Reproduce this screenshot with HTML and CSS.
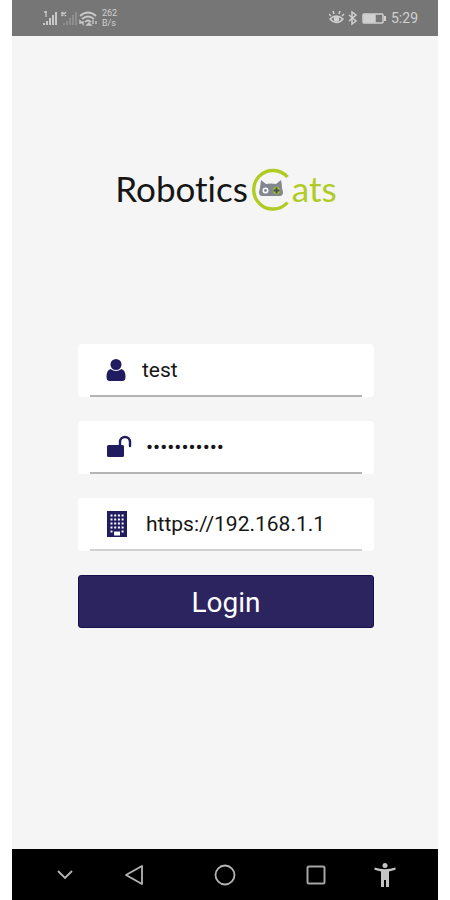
FILE: index.html
```html
<!DOCTYPE html>
<html lang="en">
<head>
<meta charset="utf-8">
<meta name="viewport" content="width=device-width, initial-scale=1">
<title>RoboticsCats Login</title>
<link rel="stylesheet" href="styles.css">
</head>
<body>
<div class="phone">
  <header class="status">
    <div class="status-group">
      <svg class="signals" width="56" height="18" viewBox="0 0 56 18" fill="none" stroke="#c9c9c9">
        <g stroke-width="2"><path d="M2 16v-2M5 16v-4M8 16V9M11 16V6M14 16V3"/><path d="M2 3h3M4 2v6" stroke-width="1.3"/></g>
        <path d="M20 3l4 4M24 3l-4 4M20 3v4" stroke-width="1.3"/>
        <path d="M22 16v-2M25 16v-4M28 16V9M31 16V6M34 16V3" stroke-width="1.5" stroke="#979797"/>
        <path d="M38 7q8-7 16 0M40 10q6-5 12 0M43 13q3-3 6 0" stroke-width="1.7"/>
        <path d="M38 15v-3l3 3v-3M45 16l2-2 2 2zM51 11v4M54 15v-3" stroke-width="1.4"/>
      </svg>
      <p class="speed">262<br>B/s</p>
    </div>
    <div class="status-group">
      <svg width="58" height="16" viewBox="0 0 58 16" fill="none" stroke="#d0d0d0" stroke-width="1.5">
        <path d="M1 9q6-6 13 0q-6 7-13 0zM2 6L0 4M5 4L4 1M10 4l1-3M13 6l2-2"/>
        <circle cx="7.500" cy="9" r="2" fill="#d0d0d0"/>
        <path d="M20 5l7 6-4 3V2l4 3-7 6"/>
        <rect x="34" y="4" width="20" height="9" rx="1"/>
        <path d="M35 5h11v7H35z" fill="#d0d0d0"/><path d="M56 6v5" stroke-width="2"/>
      </svg>
      <time class="clock">5:29</time>
    </div>
  </header>

  <main class="screen">
    <h1 class="logo">
      <span>Robotics</span>
      <svg class="logo-c" role="img" aria-label="C" width="40" height="44" viewBox="0 0 40 44">
        <path d="M37.500 9A19.300 19.300 0 1 0 37.500 34.500" fill="none" stroke="#b0cc24" stroke-width="3.400"/>
        <path d="M11 12l5 4q5-1 10 0l5-4q1 4 1 8l1 4q0 4-3 4H12q-3 0-3-4l1-4z" fill="#838890"/>
        <circle cx="15.500" cy="22.500" r="2.200" fill="#838890" stroke="#fff" stroke-width="1.500"/>
        <circle cx="26.500" cy="22.500" r="3.700" fill="#a5bd2b"/>
        <path d="M26.500 19.500v6M23.500 22.500h6" stroke="#46505a" stroke-width="1.800"/>
      </svg>
      <span class="logo-green">ats</span>
    </h1>

    <form class="login">
      <div class="field">
        <div class="field-row">
          <label class="icon" for="user" aria-label="User name">
            <svg width="20" height="24" viewBox="0 0 20 24" fill="#211b60">
              <path d="M4.500 11Q.5 12 .5 19q0 4 3 4h13q3 0 3-4 0-7-4-8-5.500 4-11 0z"/>
              <circle cx="10" cy="6.500" r="5.500"/>
            </svg>
          </label>
          <input class="input" id="user" type="text" value="test">
        </div>
      </div>
      <div class="field">
        <div class="field-row">
          <label class="icon icon-wide" for="pass" aria-label="Password">
            <svg width="26" height="24" viewBox="0 0 26 24">
              <rect x="1" y="10" width="17" height="12" rx="1.500" fill="#211b60"/>
              <path d="M14 11V7a5 5 0 0 1 10 0v4" fill="none" stroke="#211b60" stroke-width="2.400" stroke-linecap="round"/>
            </svg>
          </label>
          <input class="input" id="pass" type="password" value="password123">
        </div>
      </div>
      <div class="field field-soft">
        <div class="field-row">
          <label class="icon icon-wide" for="server" aria-label="Server address">
            <svg width="22" height="28" viewBox="0 0 22 28">
              <path d="M1 1h20v26H1z" fill="#211b60"/>
              <path d="M4.500 5.500h14M4.500 9.500h14M4.500 13.500h14M4.500 17.500h14" stroke="#fff" stroke-width="2" stroke-dasharray="2 1.700"/>
              <path d="M4.500 21.500h2M15.600 21.500h2" stroke="#fff" stroke-width="2"/>
              <path d="M8 21.500h6v4H8z" fill="#fff"/>
            </svg>
          </label>
          <input class="input" id="server" type="text" value="https://192.168.1.1">
        </div>
      </div>
      <button class="submit" type="button">Login</button>
    </form>
  </main>

  <nav class="navbar">
    <button class="nav-button" type="button" aria-label="Hide"><svg width="26" height="26" viewBox="0 0 26 26"><path d="M6 9l7 7 7-7" fill="none" stroke="#b5b5b5" stroke-width="1.800"/></svg></button>
    <button class="nav-button" type="button" aria-label="Back"><svg width="26" height="26" viewBox="0 0 26 26"><path d="M5 13l16-9v18z" fill="none" stroke="#b5b5b5" stroke-width="1.800" stroke-linejoin="round"/></svg></button>
    <button class="nav-button" type="button" aria-label="Home"><svg width="26" height="26" viewBox="0 0 26 26"><circle cx="13" cy="13" r="9.500" fill="none" stroke="#b5b5b5" stroke-width="1.800"/></svg></button>
    <button class="nav-button" type="button" aria-label="Recent apps"><svg width="26" height="26" viewBox="0 0 26 26"><rect x="4.500" y="4.500" width="17" height="17" rx="1.500" fill="none" stroke="#a5a5a5" stroke-width="2"/></svg></button>
    <button class="nav-button" type="button" aria-label="Accessibility"><svg width="26" height="26" viewBox="0 0 26 26" fill="#c4c4c4"><circle cx="13" cy="3.500" r="2.500"/><path d="M2.500 5.500Q13 9 23.500 5.500v2.200L17 9.500V25h-3v-7h-2v7H9V9.500L2.500 7.700z"/></svg></button>
  </nav>
</div>
</body>
</html>
```
FILE: styles.css
```css
* {
  box-sizing: border-box;
}

body {
  margin: 0;
  background: #fff;
  font-family: Roboto, "Liberation Sans", sans-serif;
}

.phone {
  display: flex;
  flex-direction: column;
  min-height: 100vh;
  margin: 0 12px;
  background: #f5f5f5;
}

.status {
  display: flex;
  align-items: center;
  justify-content: space-between;
  height: 36px;
  padding: 0 20px 0 30px;
  background: #767676;
  color: #d0d0d0;
}

.status-group {
  display: flex;
  align-items: center;
  gap: 4px;
}

.speed {
  margin: 0;
  font-size: 9px;
  line-height: 10px;
}

.clock {
  font-size: 14px;
}

.screen {
  flex: 1;
  padding: 132px 64px 24px 66px;
}

.logo {
  display: flex;
  align-items: flex-start;
  justify-content: center;
  gap: 2px;
  height: 44px;
  margin: 0 0 132px;
  color: #161616;
  font-family: Lato, sans-serif;
  font-size: 35px;
  font-weight: 400;
  font-variant-ligatures: none;
  line-height: 40px;
}

.logo-c {
  flex: none;
}

.logo-green {
  color: #b0cc24;
}

.login {
  display: flex;
  flex-direction: column;
  gap: 24px;
}

.field {
  padding: 0 12px;
  border-radius: 4px;
  background: #fff;
}

.field-row {
  display: flex;
  align-items: center;
  gap: 14px;
  height: 53px;
  padding-left: 16px;
  border-bottom: 2px solid #b3b5b5;
}

.field-soft .field-row {
  border-color: #d0d2d2;
}

.icon {
  display: flex;
  flex: none;
  width: 22px;
}

.icon-wide {
  width: 26px;
}

.input {
  flex: 1;
  min-width: 0;
  padding: 0;
  border: 0;
  outline: 0;
  background: none;
  color: #161616;
  font: 21px/28px Roboto, sans-serif;
}

.submit {
  height: 53px;
  padding: 2px 0 0;
  border: 1px solid #17104e;
  border-radius: 3px;
  background: #2b245f;
  color: #fff;
  font: 28px/36px Roboto, sans-serif;
}

.navbar {
  display: grid;
  grid-template-columns: 106fr 32fr 150fr 32fr 106fr;
  height: 51px;
  background: #000;
}

.nav-button {
  display: flex;
  align-items: center;
  justify-content: center;
  padding: 0;
  border: 0;
  background: none;
}
```
